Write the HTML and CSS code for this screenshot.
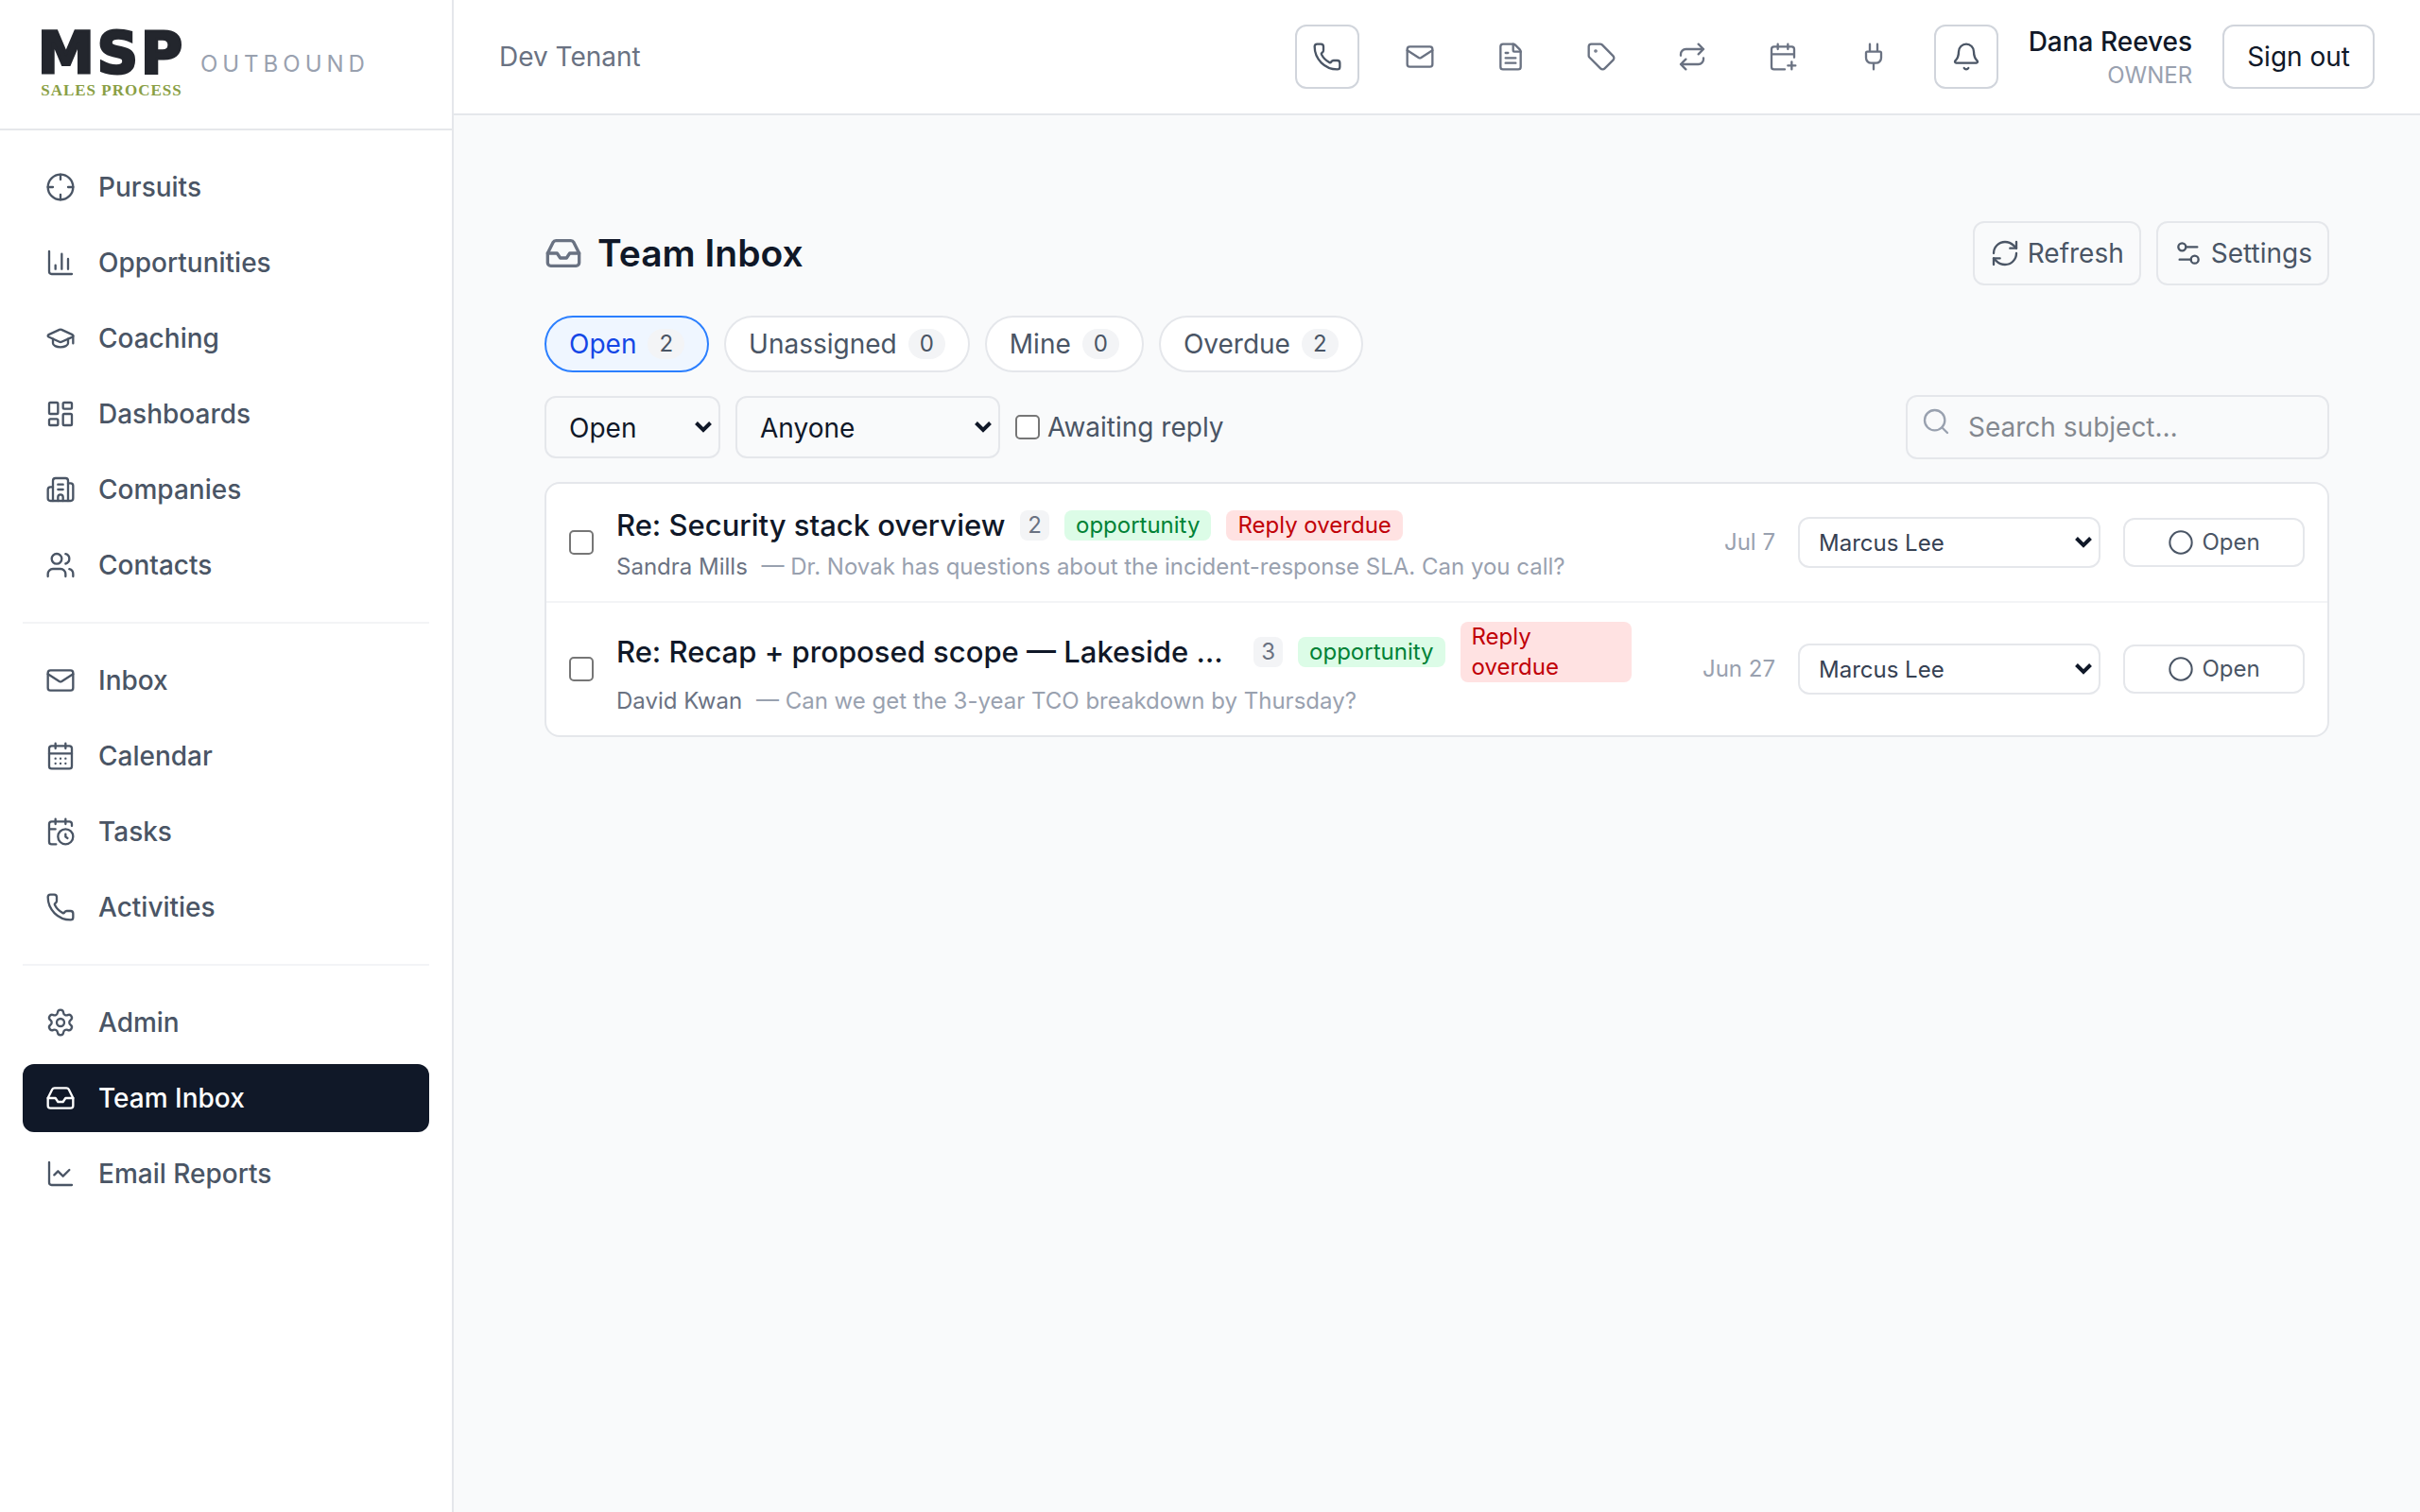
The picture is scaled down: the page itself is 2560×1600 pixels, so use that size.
FILE: index.html
```
<!DOCTYPE html>
<html lang="en">
<head>
    <meta charset="UTF-8">
    <title>Team Inbox</title>
    <link rel="stylesheet" href="styles.css">
</head>
<body>
    <!-- Icon set, referenced with <use> -->
    <svg class="sprite" aria-hidden="true">
        <symbol id="crosshair" viewBox="0 0 24 24"><circle cx="12" cy="12" r="10"/><path d="M22 12h-4M6 12H2M12 6V2M12 22v-4"/></symbol>
        <symbol id="chart-bars" viewBox="0 0 24 24"><path d="M3 3v16a2 2 0 0 0 2 2h16M18 17V9M13 17V5M8 17v-3"/></symbol>
        <symbol id="cap" viewBox="0 0 24 24"><path d="M21.42 10.922a1 1 0 0 0-.019-1.838L12.83 5.18a2 2 0 0 0-1.66 0L2.6 9.08a1 1 0 0 0 0 1.832l8.57 3.908a2 2 0 0 0 1.66 0z"/><path d="M22 10v6M6 12.5V16a6 3 0 0 0 12 0v-3.5"/></symbol>
        <symbol id="dashboard" viewBox="0 0 24 24"><rect x="3" y="3" width="7" height="9" rx="1"/><rect x="14" y="3" width="7" height="5" rx="1"/><rect x="14" y="12" width="7" height="9" rx="1"/><rect x="3" y="16" width="7" height="5" rx="1"/></symbol>
        <symbol id="building" viewBox="0 0 24 24"><path d="M10 12h4M10 8h4M14 21v-3a2 2 0 0 0-4 0v3"/><path d="M6 10H4a2 2 0 0 0-2 2v7a2 2 0 0 0 2 2h16a2 2 0 0 0 2-2V9a2 2 0 0 0-2-2h-2"/><path d="M6 21V5a2 2 0 0 1 2-2h8a2 2 0 0 1 2 2v16"/></symbol>
        <symbol id="users" viewBox="0 0 24 24"><path d="M16 21v-2a4 4 0 0 0-4-4H6a4 4 0 0 0-4 4v2M16 3.128a4 4 0 0 1 0 7.744M22 21v-2a4 4 0 0 0-3-3.87"/><circle cx="9" cy="7" r="4"/></symbol>
        <symbol id="mail" viewBox="0 0 24 24"><path d="m22 7-8.991 5.727a2 2 0 0 1-2.009 0L2 7"/><rect x="2" y="4" width="20" height="16" rx="2"/></symbol>
        <symbol id="calendar" viewBox="0 0 24 24"><path d="M8 2v4M16 2v4M3 10h18M8 14h.01M12 14h.01M16 14h.01M8 18h.01M12 18h.01M16 18h.01"/><rect x="3" y="4" width="18" height="18" rx="2"/></symbol>
        <symbol id="calendar-clock" viewBox="0 0 24 24"><path d="M16 14v2.2l1.6 1M16 2v4M21 7.5V6a2 2 0 0 0-2-2H5a2 2 0 0 0-2 2v14a2 2 0 0 0 2 2h3.5M3 10h5M8 2v4"/><circle cx="16" cy="16" r="6"/></symbol>
        <symbol id="phone" viewBox="0 0 24 24"><path d="M13.832 16.568a1 1 0 0 0 1.213-.303l.355-.465A2 2 0 0 1 17 15h3a2 2 0 0 1 2 2v3a2 2 0 0 1-2 2A18 18 0 0 1 2 4a2 2 0 0 1 2-2h3a2 2 0 0 1 2 2v3a2 2 0 0 1-.8 1.6l-.468.351a1 1 0 0 0-.292 1.233 14 14 0 0 0 6.392 6.384"/></symbol>
        <symbol id="gear" viewBox="0 0 24 24"><path d="M9.671 4.136a2.34 2.34 0 0 1 4.659 0 2.34 2.34 0 0 0 3.319 1.915 2.34 2.34 0 0 1 2.33 4.033 2.34 2.34 0 0 0 0 3.831 2.34 2.34 0 0 1-2.33 4.033 2.34 2.34 0 0 0-3.319 1.915 2.34 2.34 0 0 1-4.659 0 2.34 2.34 0 0 0-3.32-1.915 2.34 2.34 0 0 1-2.33-4.033 2.34 2.34 0 0 0 0-3.831A2.34 2.34 0 0 1 6.35 6.051a2.34 2.34 0 0 0 3.319-1.915"/><circle cx="12" cy="12" r="3"/></symbol>
        <symbol id="inbox" viewBox="0 0 24 24"><path d="M22 12h-6l-2 3h-4l-2-3H2"/><path d="M5.45 5.11 2 12v6a2 2 0 0 0 2 2h16a2 2 0 0 0 2-2v-6l-3.45-6.89A2 2 0 0 0 16.76 4H7.24a2 2 0 0 0-1.79 1.11z"/></symbol>
        <symbol id="chart-line" viewBox="0 0 24 24"><path d="M3 3v16a2 2 0 0 0 2 2h16M19 9l-5 5-4-4-3 3"/></symbol>
        <symbol id="file" viewBox="0 0 24 24"><path d="M6 22a2 2 0 0 1-2-2V4a2 2 0 0 1 2-2h8a2.4 2.4 0 0 1 1.704.706l3.588 3.588A2.4 2.4 0 0 1 20 8v12a2 2 0 0 1-2 2z"/><path d="M14 2v5a1 1 0 0 0 1 1h5M10 9H8M16 13H8M16 17H8"/></symbol>
        <symbol id="tag" viewBox="0 0 24 24"><path d="M12.586 2.586A2 2 0 0 0 11.172 2H4a2 2 0 0 0-2 2v7.172a2 2 0 0 0 .586 1.414l8.704 8.704a2.426 2.426 0 0 0 3.42 0l6.58-6.58a2.426 2.426 0 0 0 0-3.42z"/><circle cx="7.5" cy="7.5" r=".5" fill="currentColor"/></symbol>
        <symbol id="repeat" viewBox="0 0 24 24"><path d="m17 2 4 4-4 4M3 11v-1a4 4 0 0 1 4-4h14M7 22l-4-4 4-4M21 13v1a4 4 0 0 1-4 4H3"/></symbol>
        <symbol id="calendar-plus" viewBox="0 0 24 24"><path d="M16 19h6M16 2v4M19 16v6M21 12.598V6a2 2 0 0 0-2-2H5a2 2 0 0 0-2 2v14a2 2 0 0 0 2 2h8.5M3 10h18M8 2v4"/></symbol>
        <symbol id="plug" viewBox="0 0 24 24"><path d="M12 22v-5M15 8V2M17 8a1 1 0 0 1 1 1v4a4 4 0 0 1-4 4h-4a4 4 0 0 1-4-4V9a1 1 0 0 1 1-1zM9 8V2"/></symbol>
        <symbol id="bell" viewBox="0 0 24 24"><path d="M10.268 21a2 2 0 0 0 3.464 0"/><path d="M3.262 15.326A1 1 0 0 0 4 17h16a1 1 0 0 0 .74-1.673C19.41 13.956 18 12.499 18 8A6 6 0 0 0 6 8c0 4.499-1.411 5.956-2.738 7.326"/></symbol>
        <symbol id="refresh" viewBox="0 0 24 24"><path d="M3 12a9 9 0 0 1 9-9 9.75 9.75 0 0 1 6.74 2.74L21 8"/><path d="M21 3v5h-5M21 12a9 9 0 0 1-9 9 9.75 9.75 0 0 1-6.74-2.74L3 16"/><path d="M8 16H3v5"/></symbol>
        <symbol id="sliders" viewBox="0 0 24 24"><path d="M14 17H5M19 7h-9"/><circle cx="17" cy="17" r="3"/><circle cx="7" cy="7" r="3"/></symbol>
        <symbol id="search" viewBox="0 0 24 24"><path d="m21 21-4.34-4.34"/><circle cx="11" cy="11" r="8"/></symbol>
        <symbol id="circle" viewBox="0 0 24 24"><circle cx="12" cy="12" r="10"/></symbol>
    </svg>

    <div class="app">
        <aside class="sidebar">
            <div class="brand">
                <div class="logo">
                    <span class="logo-main">MSP</span>
                    <span class="logo-sub">SALES PROCESS</span>
                </div>
                <span class="brand-name">OUTBOUND</span>
            </div>
            <nav class="nav">
                <a class="nav-link" href="#"><svg class="icon"><use href="#crosshair"/></svg>Pursuits</a>
                <a class="nav-link" href="#"><svg class="icon"><use href="#chart-bars"/></svg>Opportunities</a>
                <a class="nav-link" href="#"><svg class="icon"><use href="#cap"/></svg>Coaching</a>
                <a class="nav-link" href="#"><svg class="icon"><use href="#dashboard"/></svg>Dashboards</a>
                <a class="nav-link" href="#"><svg class="icon"><use href="#building"/></svg>Companies</a>
                <a class="nav-link" href="#"><svg class="icon"><use href="#users"/></svg>Contacts</a>
                <hr class="nav-divider">
                <a class="nav-link" href="#"><svg class="icon"><use href="#mail"/></svg>Inbox</a>
                <a class="nav-link" href="#"><svg class="icon"><use href="#calendar"/></svg>Calendar</a>
                <a class="nav-link" href="#"><svg class="icon"><use href="#calendar-clock"/></svg>Tasks</a>
                <a class="nav-link" href="#"><svg class="icon"><use href="#phone"/></svg>Activities</a>
                <hr class="nav-divider">
                <a class="nav-link" href="#"><svg class="icon"><use href="#gear"/></svg>Admin</a>
                <a class="nav-link active" href="#"><svg class="icon"><use href="#inbox"/></svg>Team Inbox</a>
                <a class="nav-link" href="#"><svg class="icon"><use href="#chart-line"/></svg>Email Reports</a>
            </nav>
        </aside>

        <div class="page">
            <header class="topbar">
                <span class="tenant">Dev Tenant</span>
                <div class="topbar-actions">
                    <button class="icon-btn boxed" type="button" aria-label="Call"><svg class="icon"><use href="#phone"/></svg></button>
                    <a class="icon-btn" href="#" aria-label="Email"><svg class="icon"><use href="#mail"/></svg></a>
                    <a class="icon-btn" href="#" aria-label="Templates"><svg class="icon"><use href="#file"/></svg></a>
                    <a class="icon-btn" href="#" aria-label="Tags"><svg class="icon"><use href="#tag"/></svg></a>
                    <a class="icon-btn" href="#" aria-label="Sequences"><svg class="icon"><use href="#repeat"/></svg></a>
                    <a class="icon-btn" href="#" aria-label="Booking"><svg class="icon"><use href="#calendar-plus"/></svg></a>
                    <a class="icon-btn" href="#" aria-label="Integrations"><svg class="icon"><use href="#plug"/></svg></a>
                    <button class="icon-btn boxed" type="button" aria-label="Notifications"><svg class="icon"><use href="#bell"/></svg></button>
                    <div class="user">
                        <div class="user-name">Dana Reeves</div>
                        <div class="user-role">OWNER</div>
                    </div>
                    <button class="sign-out" type="button">Sign out</button>
                </div>
            </header>

            <main class="content">
                <div class="heading">
                    <h1><svg class="icon icon-lg"><use href="#inbox"/></svg>Team Inbox</h1>
                    <div class="heading-actions">
                        <button class="btn" type="button"><svg class="icon"><use href="#refresh"/></svg>Refresh</button>
                        <button class="btn" type="button"><svg class="icon"><use href="#sliders"/></svg>Settings</button>
                    </div>
                </div>

                <div class="pills">
                    <button class="pill selected" type="button">Open <span class="pill-count">2</span></button>
                    <button class="pill" type="button">Unassigned <span class="pill-count">0</span></button>
                    <button class="pill" type="button">Mine <span class="pill-count">0</span></button>
                    <button class="pill" type="button">Overdue <span class="pill-count">2</span></button>
                </div>

                <div class="filters">
                    <select class="select status-select" aria-label="Status"><option>Open</option></select>
                    <select class="select owner-select" aria-label="Assignee"><option>Anyone</option></select>
                    <label class="awaiting"><input class="check" type="checkbox">Awaiting reply</label>
                    <div class="search">
                        <svg class="icon search-icon"><use href="#search"/></svg>
                        <input class="search-input" type="text" placeholder="Search subject…" aria-label="Search subject">
                    </div>
                </div>

                <div class="threads">
                    <div class="thread">
                        <input class="check" type="checkbox" aria-label="Select thread">
                        <div class="thread-body">
                            <div class="thread-top">
                                <span class="subject">Re: Security stack overview</span>
                                <span class="chip chip-count">2</span>
                                <span class="chip chip-green">opportunity</span>
                                <span class="chip chip-red">Reply overdue</span>
                            </div>
                            <div class="snippet"><span class="sender">Sandra Mills</span> — Dr. Novak has questions about the incident-response SLA. Can you call?</div>
                        </div>
                        <span class="date">Jul 7</span>
                        <select class="select assignee" aria-label="Assigned to"><option>Marcus Lee</option></select>
                        <button class="status-btn" type="button"><svg class="icon icon-sm"><use href="#circle"/></svg>Open</button>
                    </div>
                    <div class="thread">
                        <input class="check" type="checkbox" aria-label="Select thread">
                        <div class="thread-body">
                            <div class="thread-top">
                                <span class="subject">Re: Recap + proposed scope — Lakeside USD</span>
                                <span class="chip chip-count">3</span>
                                <span class="chip chip-green">opportunity</span>
                                <span class="chip chip-red">Reply overdue</span>
                            </div>
                            <div class="snippet"><span class="sender">David Kwan</span> — Can we get the 3-year TCO breakdown by Thursday?</div>
                        </div>
                        <span class="date">Jun 27</span>
                        <select class="select assignee" aria-label="Assigned to"><option>Marcus Lee</option></select>
                        <button class="status-btn" type="button"><svg class="icon icon-sm"><use href="#circle"/></svg>Open</button>
                    </div>
                </div>
            </main>
        </div>
    </div>
</body>
</html>
```
FILE: styles.css
```
* { box-sizing: border-box; }
body { margin: 0; font-family: Inter, "Liberation Sans", sans-serif; font-size: 28px; line-height: 40px; color: #101828; background: #f9fafb; }
button, input, select { font: inherit; color: inherit; margin: 0; }
button { cursor: pointer; }
a { color: inherit; text-decoration: none; }

.sprite { display: none; }
.icon { width: 32px; height: 32px; flex: none; fill: none; stroke: currentColor; stroke-width: 1.75; stroke-linecap: round; stroke-linejoin: round; }
.icon-lg { width: 40px; height: 40px; color: #6a7282; stroke-width: 2; }
.icon-sm { width: 28px; height: 28px; }

.app { display: flex; min-height: 100vh; }

/* Sidebar */
.sidebar { width: 480px; flex: none; background: #fff; border-right: 2px solid #e5e7eb; }
.brand { display: flex; align-items: center; gap: 16px; padding: 32px 40px; border-bottom: 2px solid #e5e7eb; }
.logo { display: flex; flex-direction: column; gap: 8px; }
.logo-main { font-family: "DejaVu Sans", sans-serif; font-weight: bold; font-size: 60px; line-height: 48px; letter-spacing: 3px; color: #23262d; -webkit-text-stroke: 3px #23262d; }
.logo-sub { font-family: "Liberation Serif", serif; font-weight: bold; font-size: 17px; line-height: 16px; letter-spacing: 1px; color: #8a9f45; text-align: center; }
.brand-name { font-size: 24px; line-height: 32px; letter-spacing: 5px; color: #99a1af; }
.nav { display: flex; flex-direction: column; gap: 8px; padding: 24px; }
.nav-link { display: flex; align-items: center; gap: 24px; padding: 16px 24px; border-radius: 12px; font-weight: 500; color: #4a5565; }
.nav-link.active { background: #101828; color: #fff; }
.nav-divider { width: 100%; height: 2px; margin: 16px 0; border: 0; background: #f3f4f6; }

/* Top bar */
.page { flex: 1; min-width: 0; }
.topbar { display: flex; align-items: center; justify-content: space-between; padding: 24px 48px; background: #fff; border-bottom: 2px solid #e5e7eb; }
.tenant { color: #6a7282; }
.topbar-actions { display: flex; align-items: center; gap: 32px; }
.icon-btn { display: flex; padding: 16px; background: none; color: #6a7282; border-radius: 12px; }
.icon-btn.boxed { border: 2px solid #d1d5dc; color: #4a5565; }
.user { text-align: right; }
.user-name { font-weight: 500; }
.user-role { font-size: 24px; line-height: 32px; color: #99a1af; }
.sign-out { padding: 12px 24px; background: #fff; border: 2px solid #d1d5dc; border-radius: 12px; }

/* Heading */
.content { padding: 112px 96px; }
.heading { display: flex; align-items: center; justify-content: space-between; margin-bottom: 32px; }
h1 { display: flex; align-items: center; gap: 16px; margin: 0; font-size: 39px; line-height: 56px; font-weight: 600; }
.heading-actions { display: flex; gap: 16px; }
.btn { display: flex; align-items: center; gap: 8px; padding: 12px 16px; background: none; border: 2px solid #e5e7eb; border-radius: 12px; color: #4a5565; }

/* Filters */
.pills { display: flex; gap: 16px; margin-bottom: 24px; }
.pill { display: flex; align-items: center; gap: 12px; padding: 8px 24px; background: #fff; border: 2px solid #e5e7eb; border-radius: 30px; color: #4a5565; }
.pill.selected { background: #eff6ff; border-color: #2b7fff; color: #1447e6; }
.pill-count { padding: 0 12px; border-radius: 16px; background: #f3f4f6; font-size: 24px; line-height: 32px; color: #4a5565; }
.filters { display: flex; align-items: center; gap: 16px; margin-bottom: 24px; }
.select { appearance: none; height: 66px; padding: 2px 40px 0 24px; border: 2px solid #e5e7eb; border-radius: 12px; background: url("data:image/svg+xml,%3Csvg xmlns='http://www.w3.org/2000/svg' width='18' height='12'%3E%3Cpath d='M1.5 1.5 9 9l7.5-7.5' fill='none' stroke='%23101828' stroke-width='4'/%3E%3C/svg%3E") no-repeat right 7px center; }
.status-select { width: 186px; }
.owner-select { width: 280px; }
.check { appearance: none; flex: none; width: 26px; height: 26px; border: 2px solid #767676; border-radius: 5px; background: #fff; }
.awaiting { display: flex; align-items: center; gap: 8px; color: #4a5565; }
.search { position: relative; width: 448px; margin-left: auto; }
.search-icon { position: absolute; left: 16px; top: 12px; color: #99a1af; }
.search-input { display: block; width: 100%; height: 68px; padding: 0 24px 0 64px; border: 2px solid #e5e7eb; border-radius: 12px; background: none; }
.search-input::placeholder { color: #101828; opacity: 0.5; }

/* Thread list */
.threads { background: #fff; border: 2px solid #e5e7eb; border-radius: 16px; }
.thread { display: flex; align-items: center; gap: 24px; padding: 20px 24px; }
.thread + .thread { border-top: 2px solid #f3f4f6; }
.thread-body { flex: 1; min-width: 0; }
.thread-top { display: flex; align-items: center; gap: 16px; margin-bottom: 4px; }
.subject { overflow: hidden; white-space: nowrap; text-overflow: ellipsis; font-size: 31px; line-height: 48px; font-weight: 500; }
.chip { padding: 0 12px; border-radius: 8px; font-size: 24px; line-height: 32px; }
.chip-count { padding: 0 8px; background: #f3f4f6; color: #6a7282; }
.chip-green { background: #dcfce7; color: #008236; }
.chip-red { background: #ffe2e2; color: #c10007; }
.snippet { overflow: hidden; white-space: nowrap; text-overflow: ellipsis; font-size: 24px; line-height: 32px; color: #99a1af; }
.sender { margin-right: 8px; color: #6a7282; }
.date { width: 128px; flex: none; text-align: right; font-size: 24px; line-height: 32px; color: #99a1af; }
.assignee { width: 320px; height: 54px; padding-left: 20px; font-size: 24px; color: #364153; }
.status-btn { display: flex; align-items: center; justify-content: center; gap: 8px; width: 192px; height: 52px; background: none; border: 2px solid #e5e7eb; border-radius: 12px; font-size: 24px; line-height: 32px; color: #4a5565; }
```
